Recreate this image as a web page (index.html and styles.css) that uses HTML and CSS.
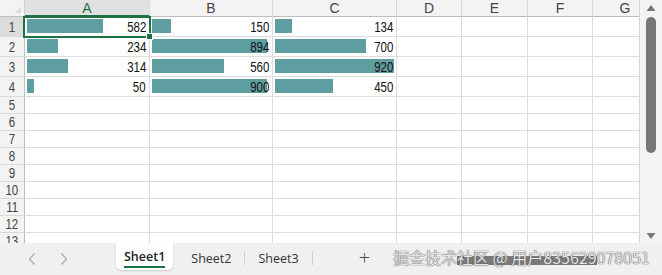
FILE: index.html
```html
<!DOCTYPE html>
<html lang="en">
<head>
    <meta charset="UTF-8">
    <title>Sheet1</title>
    <link rel="stylesheet" href="styles.css">
</head>
<body>
    <div class="app">
        <div class="main">
            <div class="sheet">
                <div class="corner"></div>
                <div class="colhead active">A</div>
                <div class="colhead">B</div>
                <div class="colhead">C</div>
                <div class="colhead">D</div>
                <div class="colhead">E</div>
                <div class="colhead">F</div>
                <div class="colhead">G</div>

                <div class="rowhead active"><span>1</span></div>
                <div class="cell data selected"><span class="bar" style="--v:582"></span><span class="num">582</span></div>
                <div class="cell data"><span class="bar" style="--v:150"></span><span class="num">150</span></div>
                <div class="cell data"><span class="bar" style="--v:134"></span><span class="num">134</span></div>
                <div class="cell"></div><div class="cell"></div><div class="cell"></div><div class="cell"></div>

                <div class="rowhead"><span>2</span></div>
                <div class="cell data"><span class="bar" style="--v:234"></span><span class="num">234</span></div>
                <div class="cell data"><span class="bar" style="--v:894"></span><span class="num">894</span></div>
                <div class="cell data"><span class="bar" style="--v:700"></span><span class="num">700</span></div>
                <div class="cell"></div><div class="cell"></div><div class="cell"></div><div class="cell"></div>

                <div class="rowhead"><span>3</span></div>
                <div class="cell data"><span class="bar" style="--v:314"></span><span class="num">314</span></div>
                <div class="cell data"><span class="bar" style="--v:560"></span><span class="num">560</span></div>
                <div class="cell data"><span class="bar" style="--v:920"></span><span class="num">920</span></div>
                <div class="cell"></div><div class="cell"></div><div class="cell"></div><div class="cell"></div>

                <div class="rowhead"><span>4</span></div>
                <div class="cell data"><span class="bar" style="--v:50"></span><span class="num">50</span></div>
                <div class="cell data"><span class="bar" style="--v:900"></span><span class="num">900</span></div>
                <div class="cell data"><span class="bar" style="--v:450"></span><span class="num">450</span></div>
                <div class="cell"></div><div class="cell"></div><div class="cell"></div><div class="cell"></div>

                <div class="rowhead"><span>5</span></div>
                <div class="cell"></div><div class="cell"></div><div class="cell"></div><div class="cell"></div><div class="cell"></div><div class="cell"></div><div class="cell"></div>
                <div class="rowhead"><span>6</span></div>
                <div class="cell"></div><div class="cell"></div><div class="cell"></div><div class="cell"></div><div class="cell"></div><div class="cell"></div><div class="cell"></div>
                <div class="rowhead"><span>7</span></div>
                <div class="cell"></div><div class="cell"></div><div class="cell"></div><div class="cell"></div><div class="cell"></div><div class="cell"></div><div class="cell"></div>
                <div class="rowhead"><span>8</span></div>
                <div class="cell"></div><div class="cell"></div><div class="cell"></div><div class="cell"></div><div class="cell"></div><div class="cell"></div><div class="cell"></div>
                <div class="rowhead"><span>9</span></div>
                <div class="cell"></div><div class="cell"></div><div class="cell"></div><div class="cell"></div><div class="cell"></div><div class="cell"></div><div class="cell"></div>
                <div class="rowhead"><span>10</span></div>
                <div class="cell"></div><div class="cell"></div><div class="cell"></div><div class="cell"></div><div class="cell"></div><div class="cell"></div><div class="cell"></div>
                <div class="rowhead"><span>11</span></div>
                <div class="cell"></div><div class="cell"></div><div class="cell"></div><div class="cell"></div><div class="cell"></div><div class="cell"></div><div class="cell"></div>
                <div class="rowhead"><span>12</span></div>
                <div class="cell"></div><div class="cell"></div><div class="cell"></div><div class="cell"></div><div class="cell"></div><div class="cell"></div><div class="cell"></div>
                <div class="rowhead"><span>13</span></div>
                <div class="cell"></div><div class="cell"></div><div class="cell"></div><div class="cell"></div><div class="cell"></div><div class="cell"></div><div class="cell"></div>
            </div>
            <div class="vscroll">
                <svg class="arrow" width="10" height="8" viewBox="0 0 10 8"><path d="M5 1 L9.5 7 L0.5 7 Z" fill="#777"/></svg>
                <div class="thumb"></div>
                <svg class="arrow down" width="10" height="8" viewBox="0 0 10 8"><path d="M0.5 1 L9.5 1 L5 7 Z" fill="#777"/></svg>
            </div>
        </div>
        <div class="tabbar">
            <div class="nav">
                <svg width="10" height="14" viewBox="0 0 10 14"><path d="M7.5 1.5 L2.5 7 L7.5 12.5" fill="none" stroke="#a8a8a8" stroke-width="1.2"/></svg>
                <svg width="10" height="14" viewBox="0 0 10 14"><path d="M2.5 1.5 L7.5 7 L2.5 12.5" fill="none" stroke="#a8a8a8" stroke-width="1.2"/></svg>
            </div>
            <div class="tab current"><span>Sheet1</span></div>
            <div class="tab"><span>Sheet2</span></div>
            <div class="tab"><span>Sheet3</span></div>
            <div class="add">+</div>
        </div>
        <div class="watermark">掘金技术<span class="band">社区 @ 用户835629</span>078051</div>
    </div>
</body>
</html>
```

FILE: styles.css
```css
body {
    margin: 0;
    width: 662px;
    height: 275px;
    overflow: hidden;
    background-color: #f0f0f0;
    font-family: "Liberation Sans", Arial, sans-serif;
}
.app {
    position: relative;
    display: flex;
    flex-direction: column;
    height: 275px;
}
.main {
    display: flex;
    height: 243px;
}
.sheet {
    width: 640px;
    height: 243px;
    overflow: hidden;
    display: grid;
    grid-template-columns: 25px 125px 123px 124px 65px 66px 65px 65px;
    grid-template-rows: 17px repeat(4, 20px);
    grid-auto-rows: 17px;
    background-color: #fff;
    border-right: 1px solid #d4d4d4;
    box-sizing: border-box;
}
.sheet > div {
    box-sizing: border-box;
}
.corner {
    background-color: #f3f3f3;
    border-right: 1px solid #cfcfcf;
    border-bottom: 1px solid #bdbdbd;
    position: relative;
}
.corner::after {
    content: "";
    position: absolute;
    right: 3px;
    bottom: 3px;
    border-left: 6px solid transparent;
    border-bottom: 6px solid #dcdcdc;
}
.colhead {
    background-color: #f3f3f3;
    border-right: 1px solid #dadada;
    border-bottom: 1px solid #bdbdbd;
    font-size: 14px;
    color: #444;
    text-align: center;
    line-height: 16px;
}
.colhead.active {
    background-color: #e1e1e1;
    color: #1e7145;
    border-bottom: 2px solid #1e7145;
}
.rowhead {
    background-color: #f3f3f3;
    border-right: 1px solid #bdbdbd;
    border-bottom: 1px solid #dadada;
    font-size: 14px;
    color: #444;
    display: flex;
    justify-content: center;
    align-items: center;
}
.rowhead span {
    transform: scaleX(0.82);
}
.rowhead.active {
    background-color: #dcdcdc;
}
.cell {
    border-right: 1px solid #dcdcdc;
    border-bottom: 1px solid #dcdcdc;
}
.cell.data {
    display: grid;
}
.bar {
    grid-area: 1 / 1;
    justify-self: start;
    margin: 2px 0 3px 2px;
    width: calc((100% - 4px) * var(--v) / 920);
    background-color: #5f9ea0;
}
.num {
    grid-area: 1 / 1;
    justify-self: end;
    align-self: end;
    margin: 0 3px 1px 0;
    font-size: 14px;
    line-height: 16px;
    color: #111;
    transform: scaleX(0.82);
    transform-origin: right center;
}
.selected {
    position: relative;
}
.selected::after {
    content: "";
    position: absolute;
    left: -2px;
    top: -1px;
    right: -2px;
    bottom: -2px;
    border: 2px solid #1e7145;
}
.selected::before {
    content: "";
    position: absolute;
    right: -4px;
    bottom: -4px;
    width: 5px;
    height: 5px;
    background-color: #1e7145;
    border: 1px solid #fff;
    z-index: 2;
}
.vscroll {
    width: 22px;
    background-color: #f3f3f3;
    display: flex;
    flex-direction: column;
    align-items: center;
    padding: 4px 0 3px;
    box-sizing: border-box;
}
.thumb {
    width: 10px;
    height: 136px;
    margin-top: 5px;
    border-radius: 5px;
    background-color: #767676;
}
.arrow.down {
    margin-top: auto;
}
.tabbar {
    height: 32px;
    display: flex;
    align-items: flex-start;
    font-family: "Open Sans", "Noto Sans", sans-serif;
    font-size: 12.5px;
    color: #333;
}
.nav {
    display: flex;
    gap: 22px;
    padding: 9px 0 0 27px;
    width: 89px;
}
.tab {
    display: flex;
    align-items: center;
    padding: 0 13px;
    border-right: 1px solid #cfcfcf;
    margin-top: 8px;
    height: 14px;
}
.tab.current {
    margin-top: 0;
    height: 27px;
    padding: 0 8px;
    background-color: #fff;
    border-right: none;
    border-radius: 0 0 5px 5px;
    box-shadow: 0 1px 2px rgba(0, 0, 0, 0.15);
    font-weight: 600;
    color: #222;
    margin-right: 5px;
}
.tab.current span {
    border-bottom: 2px solid #1e7145;
    padding-bottom: 1px;
    margin-top: 2px;
}
.add {
    font-size: 20px;
    font-weight: 300;
    color: #444;
    margin: 1px 0 0 46px;
}
.watermark {
    position: absolute;
    left: 393px;
    top: 247px;
    font-family: "Noto Sans CJK SC", "Noto Sans", sans-serif;
    font-size: 16px;
    line-height: 20px;
    color: #e6e6e6;
    text-shadow: 0 0 1px #555, 0 0 1px #555;
    white-space: nowrap;
}
.band {
    background: linear-gradient(transparent 45%, #7a7a7a 45%, #7a7a7a 85%, transparent 85%);
}
```
